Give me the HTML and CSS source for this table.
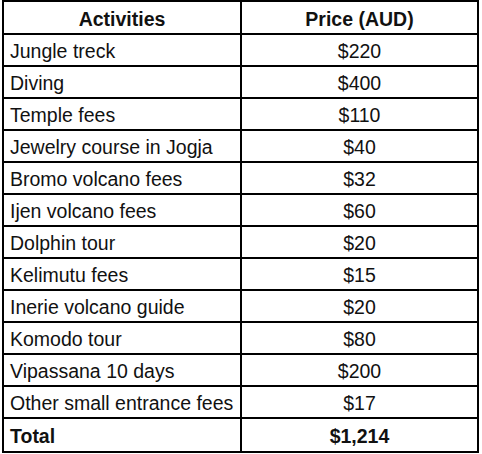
FILE: index.html
```html
<!DOCTYPE html>
<html>
<head>
<meta charset="utf-8">
<link rel="stylesheet" href="styles.css">
</head>
<body>
<div class="sheet">
  <div class="cell head">Activities</div><div class="cell head num">Price (AUD)</div>
  <div class="cell">Jungle treck</div><div class="cell num">$220</div>
  <div class="cell">Diving</div><div class="cell num">$400</div>
  <div class="cell">Temple fees</div><div class="cell num">$110</div>
  <div class="cell">Jewelry course in Jogja</div><div class="cell num">$40</div>
  <div class="cell">Bromo volcano fees</div><div class="cell num">$32</div>
  <div class="cell">Ijen volcano fees</div><div class="cell num">$60</div>
  <div class="cell">Dolphin tour</div><div class="cell num">$20</div>
  <div class="cell">Kelimutu fees</div><div class="cell num">$15</div>
  <div class="cell">Inerie volcano guide</div><div class="cell num">$20</div>
  <div class="cell">Komodo tour</div><div class="cell num">$80</div>
  <div class="cell">Vipassana 10 days</div><div class="cell num">$200</div>
  <div class="cell">Other small entrance fees</div><div class="cell num">$17</div>
  <div class="cell total">Total</div><div class="cell total num">$1,214</div>
</div>
</body>
</html>
```
FILE: styles.css
```css
html, body {
  margin: 0;
  padding: 0;
  background: #ffffff;
}
.sheet {
  margin-left: 2px;
  width: 473px;
  display: grid;
  grid-template-columns: 236px 235px;
  grid-template-rows: 31px repeat(12, 30px) 32px;
  gap: 2px;
  padding: 2px;
  background: #000;
  font-family: "Liberation Sans", Arial, sans-serif;
  font-size: 19.5px;
  color: #111;
}
.cell {
  background: #fff;
  display: flex;
  align-items: center;
  padding-left: 6px;
  padding-top: 3px;
  white-space: nowrap;
  overflow: hidden;
}
.num {
  justify-content: center;
  padding-left: 0;
}
.head {
  font-weight: bold;
  justify-content: center;
  padding-left: 0;
}
.total {
  font-weight: bold;
}
```
